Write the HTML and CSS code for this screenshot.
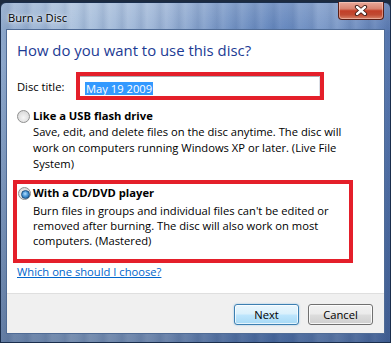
FILE: index.html
```html
<!DOCTYPE html>
<html lang="en">
<head>
<meta charset="utf-8">
<title>Burn a Disc</title>
<link rel="stylesheet" href="styles.css">
</head>
<body>
<div class="window">
  <div class="titlebar">
    <span class="title">Burn a Disc</span>
    <div class="close" aria-label="Close">
      <svg width="14" height="11" viewBox="0 0 14 11">
        <path d="M3 2 L11 9 M11 2 L3 9" stroke="#3b1a14" stroke-width="4.2" stroke-linecap="round" fill="none"/>
        <path d="M3 2 L11 9 M11 2 L3 9" stroke="#ffffff" stroke-width="2.4" stroke-linecap="round" fill="none"/>
      </svg>
    </div>
  </div>
  <div class="client">
    <div class="content">
      <h1 class="instruction">How do you want to use this disc?</h1>
      <div class="field">
        <label class="field-label">Disc title:</label>
        <div class="mark mark-input">
          <div class="textbox"><span class="sel">May 19 2009</span></div>
        </div>
      </div>
      <div class="option option-first">
        <span class="radio"></span>
        <div class="option-body">
          <div class="option-title">Like a USB flash drive</div>
          <div class="option-desc">Save, edit, and delete files on the disc anytime. The disc will<br>work on computers running Windows XP or later. (Live File<br>System)</div>
        </div>
      </div>
      <div class="option mark mark-option">
        <span class="radio radio-checked"></span>
        <div class="option-body">
          <div class="option-title">With a CD/DVD player</div>
          <div class="option-desc">Burn files in groups and individual files can't be edited or<br>removed after burning. The disc will also work on most<br>computers. (Mastered)</div>
        </div>
      </div>
      <a class="help-link" href="#">Which one should I choose?</a>
    </div>
    <div class="footer">
      <button class="btn btn-default">Next</button>
      <button class="btn">Cancel</button>
    </div>
  </div>
</div>
</body>
</html>
```

FILE: styles.css
```css
* { box-sizing: border-box; }

html, body {
  margin: 0;
  padding: 0;
}

body {
  width: 391px;
  height: 343px;
  overflow: hidden;
  background: #1d2b40;
  padding-top: 2px;
  font-family: "Open Sans", "Noto Sans", sans-serif;
  font-size: 11.2px;
  color: #000;
}

.window {
  width: 391px;
  height: 341px;
  border: 1px solid #1a2e4d;
  border-radius: 6px 6px 0 0;
  display: flex;
  flex-direction: column;
  background:
    linear-gradient(180deg, rgba(255,255,255,0.16) 0%, rgba(255,255,255,0) 30px, rgba(20,45,90,0) 60px, rgba(20,45,90,0.35) 100%),
    repeating-linear-gradient(90deg, rgba(40,70,120,0) 0px, rgba(40,70,120,0.12) 7px, rgba(255,255,255,0.06) 13px, rgba(40,70,120,0) 19px),
    linear-gradient(90deg, #8fa9cc 0%, #a9c0dc 18%, #9cb4d6 40%, #7393c4 58%, #6184bc 72%, #7c9ac9 84%, #5a7ab2 100%);
}

.titlebar {
  height: 26px;
  display: flex;
  justify-content: space-between;
  align-items: flex-start;
  padding: 0 6px 0 7px;
}

.title {
  font-size: 11.2px;
  line-height: 14px;
  margin-top: 8px;
  color: #000;
  text-shadow: 0 0 6px rgba(255,255,255,0.9), 0 0 3px rgba(255,255,255,0.9);
}

.close {
  width: 46px;
  height: 18px;
  margin-top: -1px;
  border: 1px solid #5a1f16;
  border-top: none;
  border-radius: 0 0 4px 4px;
  display: flex;
  align-items: center;
  justify-content: center;
  background: linear-gradient(180deg, #e9aa9b 0%, #d98370 40%, #c23f28 52%, #c04a32 75%, #d7846a 100%);
  box-shadow: inset 0 0 0 1px rgba(255,220,210,0.45);
}

.client {
  margin: 0 5px;
  border: 1px solid #4f6b95;
  height: 305px;
  display: flex;
  flex-direction: column;
  background: #fff;
}

.content {
  height: 263px;
  padding: 10px 10px 0 10px;
  display: flex;
  flex-direction: column;
  align-items: flex-start;
}

.instruction {
  margin: 0;
  font-weight: normal;
  font-size: 14.9px;
  line-height: 20px;
  color: #1c3b94;
}

.field {
  margin-top: 12px;
  display: flex;
  align-items: center;
}

.field-label {
  width: 59px;
  line-height: 15px;
}

.mark {
  border: 4px solid #e41f2a;
}

.mark-input {
  width: 248px;
  height: 28px;
}

.textbox {
  height: 20px;
  border-top: 1px solid #abadb3;
  border-right: 1px solid #dbdfe6;
  padding: 4px 0 0 5px;
}

.sel {
  display: inline-block;
  background: #3399ff;
  color: #fff;
  line-height: 13px;
  padding: 0 1px;
}

.option {
  display: flex;
  align-items: flex-start;
  white-space: nowrap;
}

.option-first {
  margin-top: 9px;
}

.radio {
  position: relative;
  flex: none;
  width: 13px;
  height: 13px;
  margin-top: 1px;
  margin-right: 3px;
  border-radius: 50%;
  border: 1px solid #8f9090;
  background: radial-gradient(circle at 50% 60%, #f6f6f6 0%, #e2e2e2 55%, #cfcfcf 100%);
}

.radio-checked {
  margin-left: 1px;
  margin-right: 2px;
}

.radio-checked::after {
  content: "";
  position: absolute;
  left: 2px;
  top: 2px;
  width: 7px;
  height: 7px;
  border-radius: 50%;
  border: 1px solid #1d4f80;
  background: radial-gradient(circle at 45% 40%, #b8e0ff 0%, #4a97d6 45%, #1b5a98 100%);
}

.option-title {
  font-weight: bold;
  line-height: 14px;
}

.option-desc {
  line-height: 16px;
  margin-top: 1px;
}

.mark-option {
  width: 340px;
  margin-top: 8px;
  margin-left: -4px;
  padding: 2px 0 11px 0;
}

.mark-option .option-desc {
  line-height: 15px;
  margin-top: 3px;
}

.help-link {
  margin-top: 1px;
  line-height: 15px;
  color: #0066cc;
  text-decoration: underline;
}

.footer {
  height: 40px;
  background: #f0f0f0;
  border-top: 1px solid #dfdfdf;
  display: flex;
  justify-content: flex-end;
  align-items: flex-start;
  gap: 9px;
  padding: 10px 11px 0 0;
}

.btn {
  width: 65px;
  height: 21px;
  padding: 0;
  font-family: "Open Sans", "Noto Sans", sans-serif;
  font-size: 11.2px;
  line-height: 15px;
  color: #000;
  border: 1px solid #707070;
  border-radius: 3px;
  background: linear-gradient(180deg, #f2f2f2 0%, #ebebeb 48%, #dddddd 52%, #cfcfcf 100%);
  box-shadow: inset 0 0 0 1px rgba(255,255,255,0.8);
}

.btn-default {
  border-color: #3c7fb1;
  background: linear-gradient(180deg, #eaf6fd 0%, #d9f0fc 48%, #bee6fd 52%, #a7d9f5 100%);
  box-shadow: inset 0 0 0 1px rgba(255,255,255,0.7), 0 0 2px rgba(80,160,220,0.6);
}
```
